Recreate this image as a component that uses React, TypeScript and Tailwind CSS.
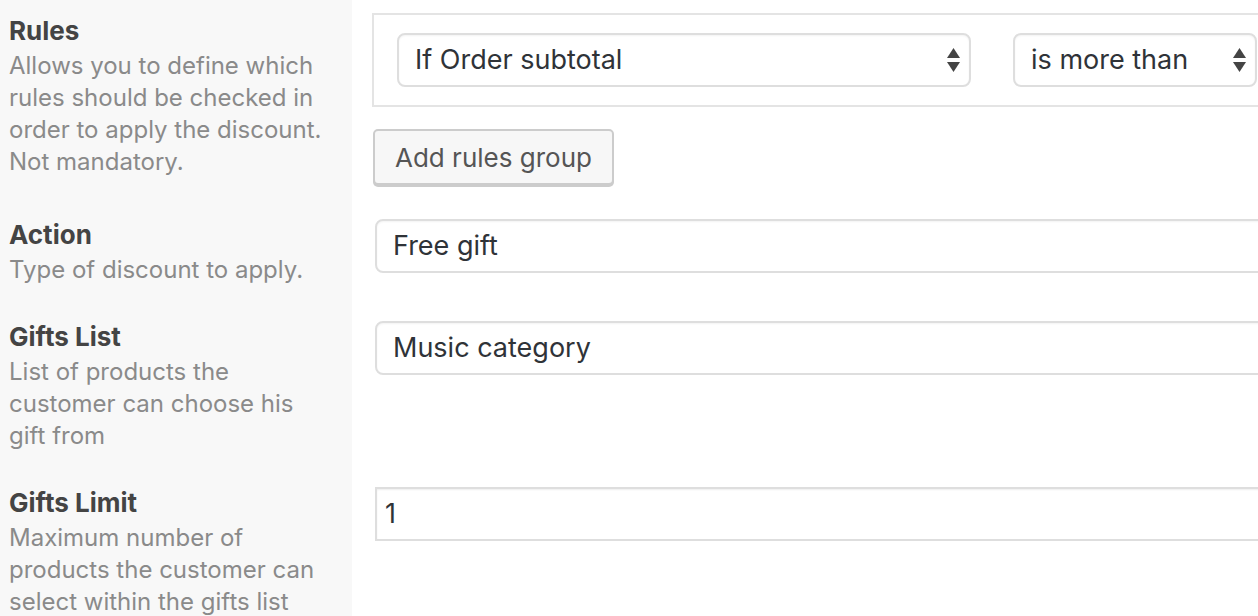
import React from 'react';

const font = { fontFamily: 'Inter, "Noto Sans", sans-serif' };

function SelectArrows() {
  return (
    <svg width="13" height="24" viewBox="0 0 13 24" className="flex-none">
      <path d="M6.5 0 L13 10 L0 10 Z" fill="#444" />
      <path d="M0 14 L13 14 L6.5 24 Z" fill="#444" />
    </svg>
  );
}

function FieldLabel({ title, desc }: { title: string; desc: string }) {
  return (
    <div className="w-[352px] flex-none bg-[#f8f8f8] pl-[9px] pr-[20px] pt-[15px] pb-5">
      <div className="text-[26px] leading-[32px] font-bold text-[#444]">{title}</div>
      <div className="mt-[3px] text-[24px] leading-[32px] text-[#8a8a8a]">{desc}</div>
    </div>
  );
}

function SelectBox({ value, width, arrows = false }: { value: string; width: string; arrows?: boolean }) {
  return (
    <div
      className={`${width} h-[54px] flex-none flex items-center justify-between rounded-[8px] border-2 border-[#dedede] bg-white pl-4 pr-[9px] shadow-[inset_0_1px_2px_rgba(0,0,0,0.05)]`}
    >
      <span className="text-[27px] text-[#2f3338]">{value}</span>
      {arrows && <SelectArrows />}
    </div>
  );
}

export default function App() {
  return (
    <div className="w-[1258px] h-[616px] overflow-hidden bg-white" style={font}>
      {/* Rules */}
      <div className="flex items-stretch">
        <FieldLabel
          title="Rules"
          desc="Allows you to define which rules should be checked in order to apply the discount. Not mandatory."
        />
        <div className="flex-none pl-[20px] pt-[13px] pb-[19px]">
          <div className="w-[1000px] border-2 border-[#e4e4e4] bg-white pl-[23px] py-[18px] flex items-center gap-[42px]">
            <SelectBox value="If Order subtotal" width="w-[574px]" arrows />
            <SelectBox value="is more than" width="w-[244px]" arrows />
          </div>
          <button className="mt-[22px] ml-px h-[56px] rounded-[5px] border-2 border-[#cccccc] bg-[#f7f7f7] px-[20px] text-[26px] text-[#555] shadow-[0_2px_0_#cccccc]">
            Add rules group
          </button>
        </div>
      </div>

      {/* Action */}
      <div className="flex items-stretch">
        <FieldLabel title="Action" desc="Type of discount to apply." />
        <div className="flex-none pl-[23px] pt-[15px]">
          <SelectBox value="Free gift" width="w-[1000px]" />
        </div>
      </div>

      {/* Gifts List */}
      <div className="flex items-stretch">
        <FieldLabel title="Gifts List" desc="List of products the customer can choose his gift from" />
        <div className="flex-none pl-[23px] pt-[15px]">
          <SelectBox value="Music category" width="w-[1000px]" />
        </div>
      </div>

      {/* Gifts Limit */}
      <div className="flex items-stretch">
        <FieldLabel
          title="Gifts Limit"
          desc="Maximum number of products the customer can select within the gifts list"
        />
        <div className="flex-none pl-[23px] pt-[15px]">
          <div className="w-[1000px] h-[54px] flex items-center border-2 border-[#dedede] bg-white pl-[8px] text-[27px] text-[#2f3338] shadow-[inset_0_1px_2px_rgba(0,0,0,0.07)]">
            1
          </div>
        </div>
      </div>
    </div>
  );
}
